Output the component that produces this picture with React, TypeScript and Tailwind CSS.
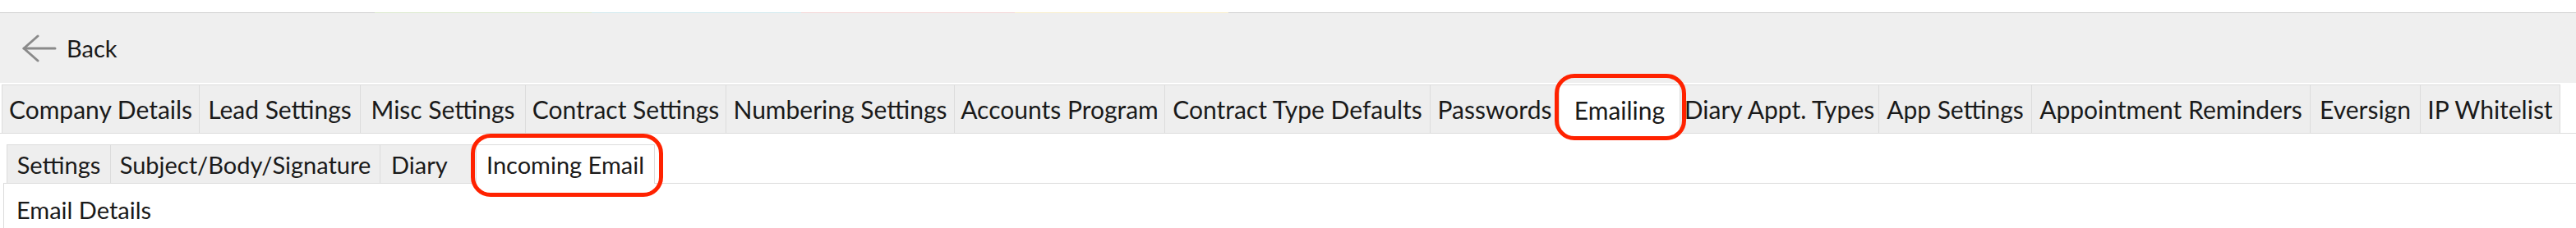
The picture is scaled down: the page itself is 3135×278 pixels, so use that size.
import React from "react";

const tabs = [
  { label: "Company Details", w: "w-[241px]" },
  { label: "Lead Settings", w: "w-[196px]" },
  { label: "Misc Settings", w: "w-[201px]" },
  { label: "Contract Settings", w: "w-[244px]" },
  { label: "Numbering Settings", w: "w-[278px]" },
  { label: "Accounts Program", w: "w-[256px]" },
  { label: "Contract Type Defaults", w: "w-[323px]" },
  { label: "Passwords", w: "w-[157px]" },
  { label: "Emailing", w: "w-[147px]", active: true },
  { label: "Diary Appt. Types", w: "w-[242px]" },
  { label: "App Settings", w: "w-[186px]" },
  { label: "Appointment Reminders", w: "w-[339px]" },
  { label: "Eversign", w: "w-[134px]" },
  { label: "IP Whitelist", w: "w-[170px]" },
];

const subTabs = [
  { label: "Settings", w: "w-[127px] justify-center" },
  { label: "Subject/Body/Signature", w: "w-[328px] justify-center" },
  { label: "Diary", w: "w-[117px] justify-start pl-[13px]" },
  { label: "Incoming Email", w: "w-[217px] justify-center", active: true },
];

function BackArrow() {
  return (
    <svg width="42" height="34" viewBox="0 0 42 34" fill="none" stroke="#8a8a8a" strokeWidth="3" strokeLinecap="round" strokeLinejoin="round">
      <path d="M2 17H40" />
      <path d="M19 2L2 17L19 32" />
    </svg>
  );
}

export default function App() {
  return (
    <div className="w-[3135px] h-[278px] overflow-hidden bg-white text-[#1a1a1a] font-['Lato','Noto_Sans',sans-serif]">
      {/* top strip */}
      <div className="h-[15px]" />
      <div className="flex h-px">
        <div className="w-[456px] bg-[#cfcfcf]" />
        <div className="w-[264px] bg-[#d9e8cb]" />
        <div className="w-[255px] bg-[#cfe8ee]" />
        <div className="w-[260px] bg-[#f3d4d4]" />
        <div className="w-[260px] bg-[#f8edc9]" />
        <div className="flex-1 bg-[#cfcfcf]" />
      </div>

      {/* header */}
      <div className="h-[85px] bg-[#efefef] flex items-center pl-[27px] gap-[12px]">
        <BackArrow />
        <span className="text-[29px] leading-none">Back</span>
      </div>

      <div className="h-[2px]" />

      {/* main tabs */}
      <div className="flex items-end h-[60px] pl-[2px] border-b border-[#dcdcdc]">
        {tabs.map((t, i) => (
          <div
            key={t.label}
            className={`${t.w} relative flex items-center justify-center whitespace-nowrap text-[30px] leading-none border-t border-r border-[#dcdcdc] ${
              i === 0 ? "border-l" : ""
            } ${t.active ? "bg-white h-[60px] -mb-px" : "bg-[#eeeeee] h-[59px]"}`}
          >
            {t.label}
            {t.active && (
              <div className="absolute -left-[6px] -right-[8px] -top-[14px] -bottom-[8px] border-[5px] border-[#ff2200] rounded-[24px] z-20" />
            )}
          </div>
        ))}
      </div>

      <div className="h-[12px]" />

      {/* sub tabs */}
      <div className="flex items-end h-[48px] pl-[8px]">
        {subTabs.map((t, i) => (
          <div
            key={t.label}
            className={`${t.w} relative flex items-center whitespace-nowrap text-[29px] leading-none border-t border-r border-[#dcdcdc] ${
              i === 0 ? "border-l" : ""
            } ${t.active ? "bg-white h-[48px] -mb-px z-10" : "bg-[#eeeeee] h-[47px]"}`}
          >
            {t.label}
            {t.active && (
              <div className="absolute -left-[7px] -right-[11px] -top-[14px] -bottom-[16px] border-[5px] border-[#ff2200] rounded-[24px] z-20" />
            )}
          </div>
        ))}
      </div>

      {/* content */}
      <div className="ml-[4px] h-[60px] border-l border-t border-[#dcdcdc] pl-[15px] pt-[17px]">
        <div className="text-[29px] leading-none">Email Details</div>
      </div>
    </div>
  );
}
